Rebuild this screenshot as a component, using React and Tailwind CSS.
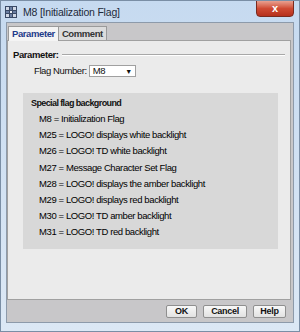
export default function App() {
  const flags = [
    'M8 = Initialization Flag',
    'M25 = LOGO! displays white backlight',
    'M26 = LOGO! TD white backlight',
    'M27 = Message Character Set Flag',
    'M28 = LOGO! displays the amber backlight',
    'M29 = LOGO! displays red backlight',
    'M30 = LOGO! TD amber backlight',
    'M31 = LOGO! TD red backlight',
  ];

  return (
    <div
      className="w-[300px] h-[332px] flex flex-col overflow-hidden bg-gradient-to-b from-[#c6daf0] to-[#dce8f5] border border-[#7a8ea5] text-[#111]"
      style={{ fontFamily: '"Liberation Sans", Arial, sans-serif' }}
    >
      {/* title bar */}
      <div className="h-[21px] flex items-start shrink-0">
        <div className="mt-[5px] ml-[4px] w-[12px] h-[12px] bg-[#3a4a66] grid grid-cols-3 gap-[1px] p-[1px]">
          <div className="bg-[#d0d8e6]" />
          <div className="bg-[#6b7fa3]" />
          <div className="bg-[#d0d8e6]" />
          <div className="bg-[#6b7fa3]" />
          <div className="bg-[#e8edf5]" />
          <div className="bg-[#6b7fa3]" />
          <div className="bg-[#d0d8e6]" />
          <div className="bg-[#6b7fa3]" />
          <div className="bg-[#d0d8e6]" />
        </div>
        <span className="ml-[6px] mt-[5px] text-[10.5px] leading-[13px] tracking-[-0.2px] text-[#1e2a3a]">M8 [Initialization Flag]</span>
        <div className="ml-auto mr-[5px] w-[38px] h-[17px] -mt-px rounded-b-[4px] border border-[#7a2a1e] bg-gradient-to-b from-[#e8a090] via-[#cf4a33] to-[#b5301c] flex items-center justify-center">
          <span className="text-white text-[11px] font-bold leading-none">x</span>
        </div>
      </div>

      {/* client area */}
      <div className="flex-1 mx-[5px] mb-[8px] flex flex-col bg-[#c8c7c9] border border-[#8d9aaa]">
        {/* tabs */}
        <div className="h-[17px] flex items-end pl-[1px] shrink-0 tracking-[-0.4px]">
          <div className="h-[15px] px-[3px] bg-[#f4f4f4] border border-b-0 border-[#9a9a9a] text-[9.5px] leading-[14px] font-bold text-[#1d3b8a] relative top-px">
            Parameter
          </div>
          <div className="h-[14px] px-[3px] bg-[#dcdcdc] border border-b-0 border-l-0 border-[#9a9a9a] text-[9.5px] leading-[13px] font-bold text-[#333]">
            Comment
          </div>
        </div>

        {/* panel */}
        <div className="flex-1 mr-[2px] bg-[#ebebeb] border border-[#a0a0a0] flex flex-col px-[5px] pt-[8px] tracking-[-0.4px]">
          <div className="flex items-center gap-[3px]">
            <span className="text-[9.5px] leading-[12px] font-bold">Parameter:</span>
            <div className="flex-1 h-[2px] border-t border-[#a8a8a8] border-b border-b-white" />
          </div>
          <div className="flex items-center mt-[3px] ml-[21px] gap-[2px]">
            <span className="text-[9.5px]">Flag Number:</span>
            <div className="w-[47px] h-[12px] bg-white border border-[#a0a0a0] flex items-center px-[3px] text-[9.5px]">
              <span>M8</span>
              <span className="ml-auto text-[7px] leading-none">▼</span>
            </div>
          </div>

          <div className="mt-[15px] ml-[10px] mr-[7px] bg-[#d8d8d8] pl-[8px] pt-[3px] pb-[9px]">
            <div className="text-[9px] leading-[14px] font-bold tracking-[-0.6px]">Special flag background</div>
            <div className="flex flex-col pl-[8px] pt-[1px]">
              {flags.map((f) => (
                <div key={f} className="text-[9.5px] leading-[16.1px] text-black">{f}</div>
              ))}
            </div>
          </div>
        </div>

        {/* buttons */}
        <div className="h-[22px] shrink-0 flex items-center justify-end gap-[6px] pr-[7px]">
          <button className="w-[31px] h-[13px] bg-gradient-to-b from-[#f8f8f8] to-[#e2e2e2] border border-[#8f8f8f] rounded-[2px] text-[9px] leading-none font-bold tracking-[-0.3px]">OK</button>
          <button className="w-[44px] h-[13px] bg-gradient-to-b from-[#f8f8f8] to-[#e2e2e2] border border-[#8f8f8f] rounded-[2px] text-[9px] leading-none font-bold tracking-[-0.3px]">Cancel</button>
          <button className="w-[33px] h-[13px] bg-gradient-to-b from-[#f8f8f8] to-[#e2e2e2] border border-[#8f8f8f] rounded-[2px] text-[9px] leading-none font-bold tracking-[-0.3px]">Help</button>
        </div>
      </div>
    </div>
  );
}
